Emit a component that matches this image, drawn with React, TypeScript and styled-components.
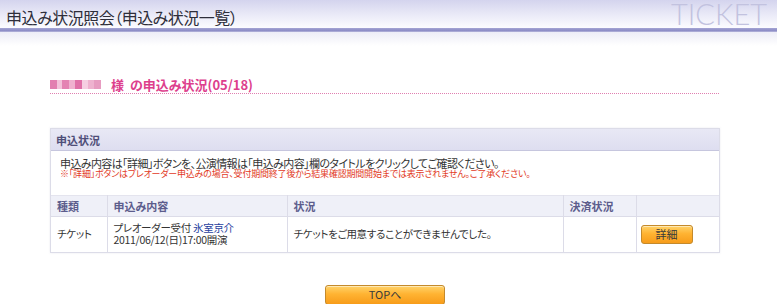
import styled, { createGlobalStyle } from "styled-components";

const GlobalStyle = createGlobalStyle`
  html, body {
    margin: 0;
    padding: 0;
    background: #ffffff;
  }
  body {
    font-family: "Noto Sans CJK JP", "Liberation Sans", sans-serif;
    color: #333333;
    font-feature-settings: "palt";
  }
`;

const Page = styled.div`
  width: 777px;
  height: 304px;
  overflow: hidden;
`;

const Header = styled.div`
  height: 28px;
  display: flex;
  align-items: flex-start;
  justify-content: space-between;
  background: linear-gradient(to bottom, #d4d4ee 0%, #e7e7f6 45%, #fcfcff 100%);
`;

const PageTitle = styled.h1`
  margin: 7px 0 0 6px;
  font-size: 16px;
  line-height: 20px;
  font-weight: normal;
  letter-spacing: -0.5px;
  color: #2e2e3a;
`;

const Logo = styled.span`
  margin: 0 10px 0 0;
  font-family: "Lato", "DejaVu Sans", sans-serif;
  font-weight: 300;
  font-size: 29px;
  line-height: 28px;
  color: #c2c2df;
`;

const HeaderRule = styled.div`
  height: 4px;
  background: linear-gradient(to bottom, #a6a6d4 0%, #8c8cc6 60%, #b8b8dc 100%);
`;

const HeaderFade = styled.div`
  height: 14px;
  background: linear-gradient(to bottom, #ededf7 0%, #ffffff 100%);
`;

const Main = styled.div`
  width: 670px;
  margin-left: 50px;
`;

const SectionTitle = styled.div`
  margin-top: 31px;
  display: flex;
  align-items: center;
  height: 14px;
  padding-bottom: 3px;
  background-image: linear-gradient(to right, #e07fb0 50%, transparent 50%);
  background-size: 2px 1px;
  background-repeat: repeat-x;
  background-position: left bottom;
  color: #dd3f8d;
  font-size: 13px;
  font-weight: bold;
`;

const Mosaic = styled.span`
  display: flex;
  margin-right: 10px;
`;

const MosaicCell = styled.span<{ $shade: string; $w: number }>`
  width: ${(p) => p.$w}px;
  height: 9px;
  background: ${(p) => p.$shade};
`;

const Box = styled.div`
  margin-top: 34px;
  border: 1px solid #dcdce8;
  box-shadow: 0 0 2px rgba(120, 120, 160, 0.15);
`;

const BoxHead = styled.div`
  height: 21px;
  display: flex;
  align-items: center;
  padding-left: 5px;
  background: linear-gradient(to bottom, #e8e8f5, #dedef0);
  border-bottom: 1px solid #c6c6de;
  color: #4e4e78;
  font-size: 11px;
  font-weight: bold;
`;

const BoxBody = styled.div`
  padding: 7px 9px 16px;
`;

const Note = styled.p<{ $warn?: boolean }>`
  margin: 0;
  font-size: ${(p) => (p.$warn ? "9px" : "11px")};
  line-height: ${(p) => (p.$warn ? "10px" : "11px")};
  letter-spacing: ${(p) => (p.$warn ? "-0.2px" : "-0.6px")};
  color: ${(p) => (p.$warn ? "#e23a1e" : "#333333")};
  white-space: nowrap;
`;

const Table = styled.table`
  width: 100%;
  border-collapse: collapse;
  table-layout: fixed;
`;

const Th = styled.th<{ $w?: number }>`
  box-sizing: border-box;
  width: ${(p) => (p.$w ? `${p.$w}px` : "auto")};
  height: 21px;
  padding: 0 6px;
  text-align: left;
  font-size: 11px;
  font-weight: bold;
  color: #5c5c8c;
  background: #eff0f8;
  border: 1px solid #dcdce8;
  border-top-color: #e4e4ee;
  &:first-child { border-left: none; }
  &:last-child { border-right: none; }
`;

const Td = styled.td<{ $pad?: number }>`
  box-sizing: border-box;
  height: 35px;
  padding: 0 ${(p) => p.$pad ?? 6}px;
  vertical-align: middle;
  font-size: 10.5px;
  line-height: 12px;
  letter-spacing: -0.3px;
  color: #333333;
  white-space: nowrap;
  border: 1px solid #dcdce8;
  border-bottom: none;
  &:first-child { border-left: none; }
  &:last-child { border-right: none; }
`;

const Link = styled.span`
  color: #1f3e9e;
`;

const OrangeButton = styled.button<{ $w: number; $h: number }>`
  display: block;
  width: ${(p) => p.$w}px;
  height: ${(p) => p.$h}px;
  padding: 0;
  border: 1px solid #c48a2c;
  border-radius: 3px;
  background: linear-gradient(to bottom, #ffd36a 0%, #ffb332 45%, #f79c1a 100%);
  box-shadow: inset 0 1px 0 rgba(255, 255, 255, 0.5);
  color: #3a3a3a;
  font-family: "Noto Sans CJK JP", "Liberation Sans", sans-serif;
  font-size: 11px;
  line-height: 1;
  letter-spacing: 0;
  cursor: pointer;
`;

const Footer = styled.div`
  display: flex;
  justify-content: center;
  margin-top: 32px;
`;

const mosaic: [string, number][] = [
  ["#e27fb0", 7],
  ["#f3c2da", 5],
  ["#e483b3", 7],
  ["#f0b0cf", 6],
  ["#e070a8", 7],
  ["#f6cfe2", 6],
  ["#eeb2cf", 6],
  ["#e79cc1", 7],
];

export default function App() {
  return (
    <Page>
      <GlobalStyle />
      <Header>
        <PageTitle>申込み状況照会（申込み状況一覧）</PageTitle>
        <Logo>TICKET</Logo>
      </Header>
      <HeaderRule />
      <HeaderFade />
      <Main>
        <SectionTitle>
          <Mosaic>
            {mosaic.map(([c, w], i) => (
              <MosaicCell key={i} $shade={c} $w={w} />
            ))}
          </Mosaic>
          様&nbsp;&nbsp;の申込み状況(05/18)
        </SectionTitle>
        <Box>
          <BoxHead>申込状況</BoxHead>
          <BoxBody>
            <Note>申込み内容は「詳細」ボタンを、公演情報は「申込み内容」欄のタイトルをクリックしてご確認ください。</Note>
            <Note $warn>
              ※「詳細」ボタンはプレオーダー申込みの場合、受付期間終了後から結果確認期間開始までは表示されません。ご了承ください。
            </Note>
          </BoxBody>
          <Table>
            <thead>
              <tr>
                <Th $w={56}>種類</Th>
                <Th $w={180}>申込み内容</Th>
                <Th>状況</Th>
                <Th $w={73}>決済状況</Th>
                <Th $w={83}></Th>
              </tr>
            </thead>
            <tbody>
              <tr>
                <Td>チケット</Td>
                <Td>
                  プレオーダー受付 <Link>氷室京介</Link>
                  <br />
                  2011/06/12(日)17:00開演
                </Td>
                <Td>チケットをご用意することができませんでした。</Td>
                <Td></Td>
                <Td $pad={4}>
                  <OrangeButton $w={52} $h={19}>詳細</OrangeButton>
                </Td>
              </tr>
            </tbody>
          </Table>
        </Box>
        <Footer>
          <OrangeButton $w={120} $h={20}>TOPへ</OrangeButton>
        </Footer>
      </Main>
    </Page>
  );
}
